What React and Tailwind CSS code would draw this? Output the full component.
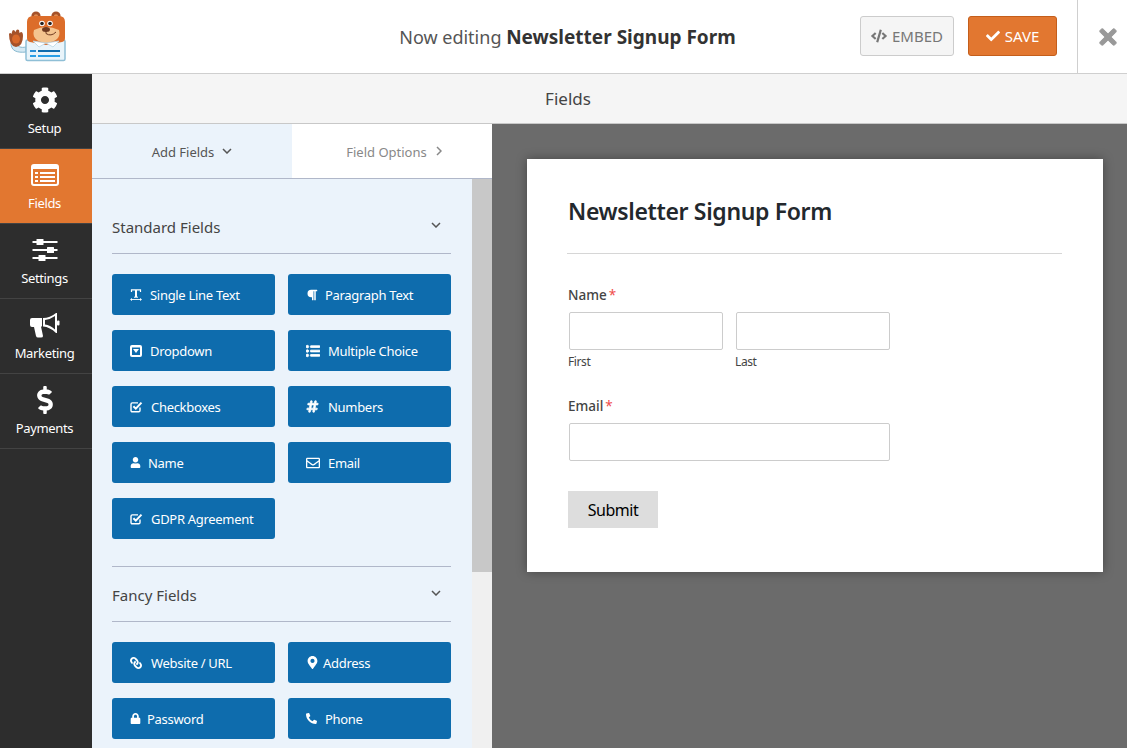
import React from 'react';
import {
  FaCog, FaDollarSign, FaCheck, FaCode, FaTimes,
  FaParagraph, FaListUl, FaHashtag,
  FaUser, FaRegEnvelope, FaLink, FaMapMarkerAlt, FaLock, FaPhoneAlt,
} from 'react-icons/fa';

function ListAltIcon() {
  return (
    <svg width="28" height="22" viewBox="0 0 28 22" fill="none" className="block">
      <rect x="1" y="1" width="26" height="20" rx="2" stroke="#fff" strokeWidth="2" />
      <rect x="1" y="1" width="26" height="4" fill="#fff" />
      <g fill="#fff">
        <rect x="4" y="8" width="3" height="2" />
        <rect x="9" y="8" width="15" height="2" />
        <rect x="4" y="12" width="3" height="2" />
        <rect x="9" y="12" width="15" height="2" />
        <rect x="4" y="16" width="3" height="2" />
        <rect x="9" y="16" width="15" height="2" />
      </g>
    </svg>
  );
}

function SlidersIcon() {
  return (
    <svg width="26" height="24" viewBox="0 0 26 24" fill="#fff" className="block">
      <rect x="0.5" y="3" width="25" height="2" />
      <rect x="0.5" y="11" width="25" height="2" />
      <rect x="0.5" y="19" width="25" height="2" />
      <rect x="4.5" y="1" width="7" height="6" rx="0.5" />
      <rect x="15" y="9" width="7" height="6" rx="0.5" />
      <rect x="6.5" y="17" width="7" height="6" rx="0.5" />
    </svg>
  );
}

function BullhornIcon() {
  return (
    <svg width="30" height="25" viewBox="0 0 30 25" fill="#fff" className="block">
      <path fillRule="evenodd" d="M27 0 L27 20 L26 20 Q20 14 13 13.5 L13 5 Q20 5 26 0 Z M25 3 Q20 6.5 15 7 L15 11.5 Q20 12 25 16.5 Z" />
      <path d="M0 7 Q0 5 2 5 L12 5 L12 13.5 L11 13.5 L13 23 Q13 24.5 11 24.5 L8 24.5 Q6.5 24.5 6 23 L4 14 L2 14 Q0 14 0 12 Z" />
      <rect x="27" y="7.5" width="2.5" height="5" rx="1" />
    </svg>
  );
}

function TextWidthIcon() {
  return (
    <svg width="12" height="12" viewBox="0 0 12 12" fill="none" className="block">
      <path d="M1.5 3 L1.5 0.8 L10.5 0.8 L10.5 3" stroke="#fff" strokeWidth="1.2" />
      <path d="M6 1 L6 8" stroke="#fff" strokeWidth="2" />
      <path d="M4 8.2 L8 8.2" stroke="#fff" strokeWidth="1" />
      <path d="M1 10.5 L11 10.5" stroke="#fff" strokeWidth="0.9" />
      <path d="M0 10.5 L2 9 L2 12 Z M12 10.5 L10 9 L10 12 Z" fill="#fff" />
    </svg>
  );
}

function CheckSquareIcon() {
  return (
    <svg width="13" height="12" viewBox="0 0 13 12" fill="none" className="block">
      <path d="M10 6.5 L10 9.5 Q10 10.8 8.7 10.8 L2.3 10.8 Q1 10.8 1 9.5 L1 3.2 Q1 1.9 2.3 1.9 L8 1.9" stroke="#fff" strokeWidth="1.4" />
      <path d="M3.4 5.2 L5.8 7.6 L11.5 1.6" stroke="#fff" strokeWidth="2" />
    </svg>
  );
}

function DropdownIcon() {
  return (
    <svg width="12" height="12" viewBox="0 0 12 12" className="block">
      <rect x="0" y="0" width="12" height="12" rx="2" fill="#fff" />
      <rect x="2" y="2.5" width="8" height="7.5" fill="#0e6cad" />
      <path d="M3 4 L9 4 L6 8 Z" fill="#fff" />
    </svg>
  );
}

function ChevronDown({ className }) {
  return (
    <svg width="10" height="6" viewBox="0 0 10 6" fill="none" className={className}>
      <path d="M1 1 L5 5 L9 1" stroke="currentColor" strokeWidth="1.5" />
    </svg>
  );
}

function ChevronRight({ className }) {
  return (
    <svg width="6" height="10" viewBox="0 0 6 10" fill="none" className={className}>
      <path d="M1 1 L5 5 L1 9" stroke="currentColor" strokeWidth="1.5" />
    </svg>
  );
}

const navItems = [
  { label: 'Setup', icon: <FaCog size={26} /> },
  { label: 'Fields', icon: <ListAltIcon />, active: true },
  { label: 'Settings', icon: <SlidersIcon /> },
  { label: 'Marketing', icon: <BullhornIcon /> },
  { label: 'Payments', icon: <FaDollarSign size={28} /> },
];

const standardFields = [
  { label: 'Single Line Text', icon: <TextWidthIcon />, slot: 'w-[20px]' },
  { label: 'Paragraph Text', icon: <FaParagraph size={12} />, slot: 'w-[19px]' },
  { label: 'Dropdown', icon: <DropdownIcon />, slot: 'w-[20px]' },
  { label: 'Multiple Choice', icon: <FaListUl size={14} stroke="currentColor" strokeWidth={30} />, slot: 'w-[22px]' },
  { label: 'Checkboxes', icon: <CheckSquareIcon />, slot: 'w-[21px]' },
  { label: 'Numbers', icon: <FaHashtag size={13} stroke="currentColor" strokeWidth={30} />, slot: 'w-[22px]' },
  { label: 'Name', icon: <FaUser size={11} />, slot: 'w-[18px]' },
  { label: 'Email', icon: <FaRegEnvelope size={14} />, slot: 'w-[22px]' },
  { label: 'GDPR Agreement', icon: <CheckSquareIcon />, slot: 'w-[21px]' },
];

const fancyFields = [
  { label: 'Website / URL', icon: <FaLink size={12} className="-scale-x-100" />, slot: 'w-[21px]' },
  { label: 'Address', icon: <FaMapMarkerAlt size={13} />, slot: 'w-[17px]' },
  { label: 'Password', icon: <FaLock size={11} />, slot: 'w-[17px]' },
  { label: 'Phone', icon: <FaPhoneAlt size={11} />, slot: 'w-[19px]' },
];

function BearLogo() {
  return (
    <svg width="60" height="54" viewBox="0 0 60 54" className="block">
      {/* arm and shirt */}
      <path d="M5 33 C5 41 11 43 20 42 L20 37 C15 38 11 37 11 33 Z" fill="#d5e9f3" stroke="#86b8cf" strokeWidth="1" />
      <rect x="20" y="30" width="39" height="20.5" rx="1.5" fill="#e9f4fa" stroke="#8fbfd6" strokeWidth="1.5" />
      {/* ears */}
      <circle cx="30" cy="6" r="4.6" fill="#a5522a" />
      <circle cx="50" cy="6" r="4.6" fill="#a5522a" />
      <circle cx="30" cy="6.5" r="2.2" fill="#e08a4e" />
      <circle cx="50" cy="6.5" r="2.2" fill="#e08a4e" />
      {/* head */}
      <path d="M21 12 Q21 6 27 6 L53 6 Q59 6 59 12 L59 28 Q59 31 56 32 L40 35 L24 32 Q21 31 21 28 Z" fill="#dc6d2a" />
      <path d="M28 20 Q40 14 53 20 Q56 31 40 33 Q25 31 28 20 Z" fill="#f4c48f" />
      {/* eyes and nose */}
      <circle cx="36" cy="13.5" r="2.8" fill="#fff" />
      <circle cx="44" cy="13.5" r="2.8" fill="#fff" />
      <circle cx="36" cy="13.5" r="1.8" fill="#26211f" />
      <circle cx="44" cy="13.5" r="1.8" fill="#26211f" />
      <ellipse cx="40" cy="19.5" rx="4" ry="2.5" fill="#6f3a20" />
      <path d="M40 21 L40 23.5 Q45 27 50 22" fill="none" stroke="#6f3a20" strokeWidth="1" />
      {/* collar */}
      <path d="M27 31 L33 37 L40 33 L47 37 L53 31 L40 33 Z" fill="#fff" stroke="#b8d6e4" strokeWidth="0.8" />
      {/* form lines on shirt */}
      <rect x="24" y="40" width="6" height="2" fill="#2a8fd6" />
      <rect x="32" y="40" width="22" height="2" fill="#0f6cad" />
      <rect x="24" y="45" width="6" height="2" fill="#2a9fe6" />
      <rect x="32" y="45" width="22" height="2" fill="#2a9fe6" />
      {/* paw */}
      <path d="M3 24 Q3 36 10 37 Q17 36 17 26 Q17 22 15 22 L13.5 23 L13 20 Q11.5 19 10.5 20 L9.5 22 L8 20 Q6 20 6 22 L5.5 24 Q4 22 3 24 Z" fill="#a5522a" />
      <ellipse cx="10" cy="29" rx="4" ry="4.5" fill="#d8692b" />
    </svg>
  );
}

function Header() {
  return (
    <header className="flex h-[74px] shrink-0 items-center border-b border-[#cfcfcf] bg-white">
      <div className="w-[92px] shrink-0 pl-[6px] pt-[1px]">
        <BearLogo />
      </div>
      <div className="w-[768px] shrink-0 pl-[183px] pt-[2px] text-center text-[18px] text-[#555] whitespace-nowrap">
        Now editing <span className="text-[19px] font-bold text-[#333]">Newsletter Signup Form</span>
      </div>
      <div className="mb-[1px] flex h-[40px] w-[94px] shrink-0 items-center justify-center gap-[5px] rounded-[3px] border border-[#cccccc] bg-[#f5f5f5] text-[15px] text-[#777]">
        <FaCode size={16} />
        EMBED
      </div>
      <div className="mb-[1px] ml-[14px] flex h-[40px] w-[89px] shrink-0 items-center justify-center gap-[5px] rounded-[3px] border border-[#c45e1b] bg-[#e27730] text-[15px] text-white">
        <FaCheck size={14} />
        SAVE
      </div>
      <div className="ml-[20px] flex h-full flex-1 items-center justify-center border-l border-[#cfcfcf] pl-[10px] text-[#999]">
        <FaTimes size={24} stroke="currentColor" strokeWidth={20} />
      </div>
    </header>
  );
}

function Sidebar() {
  return (
    <nav className="w-[92px] shrink-0 bg-[#2d2d2d]">
      {navItems.map((item) => (
        <div
          key={item.label}
          className={`flex h-[75px] flex-col items-center border-b border-[#434343] pr-[3px] text-white ${item.active ? 'bg-[#e27730]' : ''}`}
        >
          <div className="flex h-[45px] items-center pt-[7px]">{item.icon}</div>
          <div className="text-[13px] leading-[18px] tracking-[-0.35px]">{item.label}</div>
        </div>
      ))}
    </nav>
  );
}

function FieldButton({ field }) {
  return (
    <div className="flex h-[41px] items-center rounded-[3px] bg-[#0e6cad] pl-[18px] text-[13px] tracking-[-0.3px] text-white whitespace-nowrap">
      <span className={`flex shrink-0 ${field.slot}`}>{field.icon}</span>
      <span className="pt-[2px]">{field.label}</span>
    </div>
  );
}

function SectionTitle({ title }) {
  return (
    <div className="flex h-[55px] items-center justify-between border-b border-[#b0b7c9] text-[15px] text-[#444]">
      <span className="pt-[2px]">{title}</span>
      <ChevronDown className="mb-[2px] mr-[10px] text-[#555]" />
    </div>
  );
}

function FieldsPanel() {
  return (
    <aside className="flex w-[400px] shrink-0 flex-col">
      <div className="flex h-[55px] shrink-0 border-b border-[#b0b7c9]">
        <div className="flex w-[200px] items-center justify-center gap-[8px] bg-[#ebf3fb] text-[13px] text-[#555]">
          <span className="pt-[3px]">Add Fields</span> <ChevronDown />
        </div>
        <div className="flex w-[200px] items-center justify-center gap-[9px] bg-white pl-[4px] text-[13px] text-[#888]">
          <span className="pt-[3px]">Field Options</span> <ChevronRight />
        </div>
      </div>
      <div className="flex min-h-0 flex-1">
        <div className="w-[380px] shrink-0 overflow-hidden bg-[#ebf3fb] pl-[20px] pr-[21px] pt-[20px]">
          <SectionTitle title="Standard Fields" />
          <div className="mt-[20px] grid grid-cols-2 gap-x-[13px] gap-y-[15px]">
            {standardFields.map((f) => <FieldButton key={f.label} field={f} />)}
          </div>
          <div className="mt-[27px] border-t border-[#b0b7c9]">
            <SectionTitle title="Fancy Fields" />
          </div>
          <div className="mt-[20px] grid grid-cols-2 gap-x-[13px] gap-y-[15px]">
            {fancyFields.map((f) => <FieldButton key={f.label} field={f} />)}
          </div>
        </div>
        <div className="w-[20px] shrink-0 bg-[#f0f0f0]">
          <div className="h-[393px] bg-[#c8c8c8]" />
        </div>
      </div>
    </aside>
  );
}

function RequiredLabel({ children }) {
  return (
    <div className="ml-[1px] text-[13.5px] font-medium leading-[20px] text-[#444]">
      {children}<span className="ml-[2px] font-normal text-[#f04a4a]">*</span>
    </div>
  );
}

function FormPreview() {
  return (
    <main className="min-w-0 flex-1 bg-[#6b6b6b] pl-[35px] pt-[35px]">
      <div className="h-[413px] w-[576px] bg-white pl-[40px] pr-[41px] pt-[35px] shadow-[0_0_10px_rgba(0,0,0,0.35)]">
        <div className="h-[60px] border-b border-[#d6d6d6] pl-[1px] text-[23px] font-semibold leading-[34px] tracking-[-0.35px] text-[#23282d]">
          Newsletter Signup Form
        </div>
        <div className="mt-[31px]">
          <RequiredLabel>Name</RequiredLabel>
        </div>
        <div className="mt-[7px] flex gap-[13px] pl-[2px]">
          <div className="w-[154px]">
            <div className="h-[38px] rounded-[2px] border border-[#cccccc] bg-white" />
            <div className="-ml-[1px] mt-[3px] text-[12px] leading-[17px] tracking-[-0.4px] text-[#444]">First</div>
          </div>
          <div className="w-[154px]">
            <div className="h-[38px] rounded-[2px] border border-[#cccccc] bg-white" />
            <div className="-ml-[1px] mt-[3px] text-[12px] leading-[17px] tracking-[-0.4px] text-[#444]">Last</div>
          </div>
        </div>
        <div className="mt-[26px]">
          <RequiredLabel>Email</RequiredLabel>
        </div>
        <div className="ml-[2px] mt-[7px] h-[38px] w-[321px] rounded-[2px] border border-[#cccccc] bg-white" />
        <div className="ml-[1px] mt-[30px] flex h-[37px] w-[90px] items-center justify-center bg-[#dddddd] text-[16px] tracking-[-0.5px] text-black">
          Submit
        </div>
      </div>
    </main>
  );
}

export default function App() {
  return (
    <div className="flex h-screen flex-col overflow-hidden bg-white font-['Noto_Sans','Open_Sans',sans-serif]">
      <Header />
      <div className="flex min-h-0 flex-1">
        <Sidebar />
        <div className="flex min-w-0 flex-1 flex-col">
          <div className="flex h-[50px] shrink-0 items-center justify-center border-b border-[#c8c8c8] bg-[#f5f5f5] pr-[83px] text-[17px] text-[#444]">
            Fields
          </div>
          <div className="flex min-h-0 flex-1">
            <FieldsPanel />
            <FormPreview />
          </div>
        </div>
      </div>
    </div>
  );
}
